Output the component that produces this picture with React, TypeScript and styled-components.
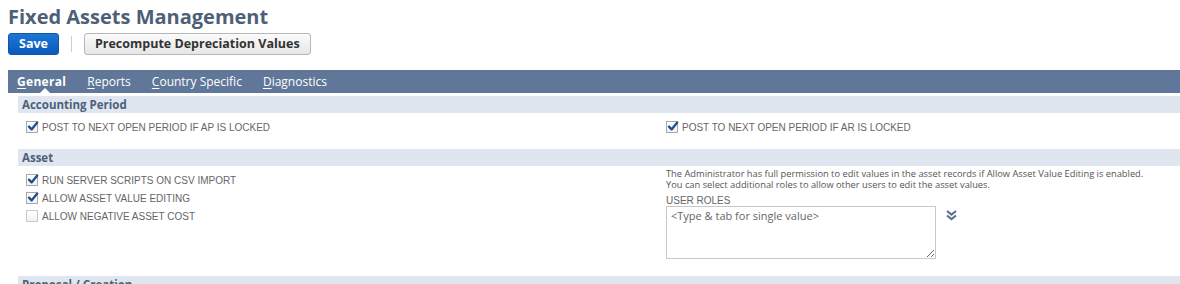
import React from 'react'
import styled, { createGlobalStyle } from 'styled-components'

const GlobalStyle = createGlobalStyle`
  html, body {
    margin: 0;
    padding: 0;
    background: #fff;
    overflow: hidden;
  }
  body {
    font-family: "Open Sans", "Liberation Sans", sans-serif;
  }
`

const Page = styled.div`
  padding: 5px 0 0 8px;
`

const Title = styled.h1`
  margin: 0;
  font-size: 20px;
  line-height: 24px;
  font-weight: 700;
  color: #4d5f79;
`

const ButtonBar = styled.div`
  display: flex;
  align-items: center;
  margin-top: 4px;
  height: 22px;
`

const BaseButton = styled.button`
  height: 22px;
  padding: 0 10px;
  border-radius: 3px;
  font-family: "Open Sans", sans-serif;
  font-size: 12.5px;
  font-weight: 700;
  line-height: 20px;
  cursor: pointer;
`

const PrimaryButton = styled(BaseButton)`
  border: 1px solid #0f55a8;
  background: linear-gradient(#1c76d6, #0a5ab9);
  color: #fff;
`

const SecondaryButton = styled(BaseButton)`
  border: 1px solid #b7b7b7;
  background: linear-gradient(#fbfbfb, #e6e6e6);
  color: #333;
`

const Divider = styled.span`
  width: 1px;
  height: 16px;
  margin: 0 12px;
  background: #cfcfcf;
`

const TabBar = styled.div`
  display: flex;
  margin-top: 15px;
  height: 23px;
  background: #607799;
`

const Tab = styled.div<{ $active?: boolean }>`
  position: relative;
  padding: 0 11px 0 9px;
  margin-right: 1px;
  line-height: 23px;
  font-size: 12px;
  font-weight: ${(p) => (p.$active ? 700 : 400)};
  letter-spacing: ${(p) => (p.$active ? '0.3px' : '0')};
  color: #fff;

  u {
    text-decoration-thickness: 1px;
    text-underline-offset: 2px;
  }

  &::after {
    content: '';
    display: ${(p) => (p.$active ? 'block' : 'none')};
    position: absolute;
    left: 50%;
    bottom: 0;
    margin-left: -3px;
    border-left: 5px solid transparent;
    border-right: 5px solid transparent;
    border-bottom: 5px solid #fff;
  }
`

const TabPanel = styled.div`
  padding: 3px 0 0 10px;
`

const SectionHeader = styled.div`
  height: 17px;
  padding-left: 4px;
  background: #dfe6ef;
  font-size: 11.5px;
  line-height: 17px;
  font-weight: 700;
  color: #4d5f79;
  white-space: nowrap;
  overflow: hidden;
`

const FieldGrid = styled.div<{ $bottom: number }>`
  display: grid;
  grid-template-columns: 640px 1fr;
  padding-bottom: ${(p) => p.$bottom}px;
`

const Column = styled.div<{ $top: number }>`
  padding: ${(p) => p.$top}px 0 0 8px;
`

const FieldRow = styled.label`
  display: flex;
  align-items: center;
  gap: 4px;
  height: 18px;
`

const Box = styled.span<{ $checked?: boolean }>`
  display: inline-flex;
  width: 12px;
  height: 12px;
  box-sizing: border-box;
  border: 1px solid ${(p) => (p.$checked ? '#a9a9a9' : '#c9c9c9')};
  background: linear-gradient(#ffffff, #f1f1f1);
  position: relative;

  svg {
    position: absolute;
    left: 0;
    top: -1px;
  }
`

const Label = styled.span`
  font-family: "Liberation Sans", Arial, sans-serif;
  font-size: 10px;
  color: #666;
  text-transform: uppercase;
  white-space: nowrap;
  padding-top: 1px;
`

const Help = styled.p`
  margin: 0;
  font-size: 9.3px;
  line-height: 11px;
  color: #555;
  white-space: nowrap;
`

const FieldLabel = styled(Label)`
  display: block;
  margin-top: 5px;
  padding-top: 0;
  line-height: 11px;
`

const RolesRow = styled.div`
  display: flex;
  align-items: flex-start;
  gap: 10px;
`

const RolesInput = styled.textarea`
  width: 270px;
  height: 53px;
  box-sizing: border-box;
  margin: 0;
  padding: 2px 4px;
  border: 1px solid #c8c8c8;
  font-family: "Open Sans", sans-serif;
  font-size: 11px;
  line-height: 14px;
  color: #333;
  resize: both;
  outline: none;

  &::placeholder {
    color: #666;
  }
`

const ExpandIcon = styled.span`
  display: inline-flex;
  margin-top: 4px;
  color: #5a7192;
`

const Checkbox = ({ checked, label }: { checked?: boolean; label: string }) => (
  <FieldRow>
    <Box $checked={checked}>
      {checked && (
        <svg width="12" height="12" viewBox="0 0 12 12">
          <path d="M2 5.6 L4.6 8.4 L10.2 1.6" fill="none" stroke="#1d4e8f" strokeWidth="2.3" strokeLinecap="round" strokeLinejoin="round" />
        </svg>
      )}
    </Box>
    <Label>{label}</Label>
  </FieldRow>
)

const DoubleChevron = () => (
  <svg width="11" height="11" viewBox="0 0 11 11">
    <path d="M1 1 L5.5 4.5 L10 1" fill="none" stroke="currentColor" strokeWidth="2.2" />
    <path d="M1 5.5 L5.5 9 L10 5.5" fill="none" stroke="currentColor" strokeWidth="2.2" />
  </svg>
)

export default function App() {
  return (
    <Page>
      <GlobalStyle />
      <Title>Fixed Assets Management</Title>
      <ButtonBar>
        <PrimaryButton>Save</PrimaryButton>
        <Divider />
        <SecondaryButton>Precompute Depreciation Values</SecondaryButton>
      </ButtonBar>

      <TabBar>
        <Tab $active>
          <u>G</u>eneral
        </Tab>
        <Tab>
          <u>R</u>eports
        </Tab>
        <Tab>
          <u>C</u>ountry Specific
        </Tab>
        <Tab>
          <u>D</u>iagnostics
        </Tab>
      </TabBar>

      <TabPanel>
        <SectionHeader>Accounting Period</SectionHeader>
        <FieldGrid $bottom={13}>
          <Column $top={5}>
            <Checkbox checked label="Post to next open period if AP is locked" />
          </Column>
          <Column $top={5}>
            <Checkbox checked label="Post to next open period if AR is locked" />
          </Column>
        </FieldGrid>

        <SectionHeader>Asset</SectionHeader>
        <FieldGrid $bottom={17}>
          <Column $top={5}>
            <Checkbox checked label="Run server scripts on CSV import" />
            <Checkbox checked label="Allow asset value editing" />
            <Checkbox label="Allow negative asset cost" />
          </Column>
          <Column $top={2}>
            <Help>
              The Administrator has full permission to edit values in the asset records if Allow Asset Value Editing is enabled.
            </Help>
            <Help>You can select additional roles to allow other users to edit the asset values.</Help>
            <FieldLabel>User Roles</FieldLabel>
            <RolesRow>
              <RolesInput placeholder="<Type & tab for single value>" />
              <ExpandIcon>
                <DoubleChevron />
              </ExpandIcon>
            </RolesRow>
          </Column>
        </FieldGrid>

        <SectionHeader>Proposal / Creation</SectionHeader>
      </TabPanel>
    </Page>
  )
}
